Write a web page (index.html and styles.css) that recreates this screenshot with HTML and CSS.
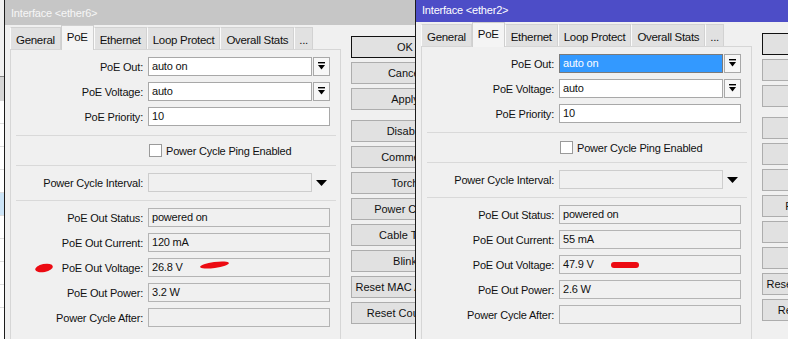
FILE: index.html
```html
<!DOCTYPE html>
<html lang="en">

<head>
  <meta charset="UTF-8">
  <title>Interface PoE</title>
  <link rel="stylesheet" href="styles.css">
</head>

<body>
  <div class="desk">
    <!-- list window behind, only a sliver shows -->
    <div class="behind">
      <div class="bh-top"></div>
      <div class="bh-head"></div>
      <div class="bh-row"></div>
      <div class="bh-row"></div>
      <div class="bh-row"></div>
      <div class="bh-row"></div>
      <div class="bh-row sel"></div>
      <div class="bh-row"></div>
      <div class="bh-row"></div>
      <div class="bh-row"></div>
      <div class="bh-row"></div>
    </div>

    <section class="win win-left">
      <div class="title">Interface &lt;ether6&gt;</div>
      <div class="body">
        <div class="main">
          <div class="tabs">
            <span class="tab">General</span>
            <span class="tab on">PoE</span>
            <span class="tab">Ethernet</span>
            <span class="tab">Loop Protect</span>
            <span class="tab">Overall Stats</span>
            <span class="tab more">...</span>
          </div>
          <div class="panel">
            <div class="grp first">
              <div class="row">
                <label class="label">PoE Out:</label>
                <div class="combo">
                  <div class="field">auto on</div>
                  <div class="drop"><svg width="9" height="9" viewBox="0 0 9 9"><rect x="1" y="0" width="7" height="1.4" fill="#000"/><path d="M1 3 H8 L4.5 7.5 Z" fill="#000"/></svg></div>
                </div>
              </div>
              <div class="row">
                <label class="label">PoE Voltage:</label>
                <div class="combo">
                  <div class="field">auto</div>
                  <div class="drop"><svg width="9" height="9" viewBox="0 0 9 9"><rect x="1" y="0" width="7" height="1.4" fill="#000"/><path d="M1 3 H8 L4.5 7.5 Z" fill="#000"/></svg></div>
                </div>
              </div>
              <div class="row">
                <label class="label">PoE Priority:</label>
                <div class="field">10</div>
              </div>
            </div>
            <hr class="sep">
            <div class="grp chk">
              <div class="row">
                <span></span>
                <label class="check"><span class="box"></span>Power Cycle Ping Enabled</label>
              </div>
            </div>
            <hr class="sep">
            <div class="grp">
              <div class="row">
                <label class="label">Power Cycle Interval:</label>
                <div class="combo">
                  <div class="field off"></div>
                  <div class="arrow"><svg width="11" height="6" viewBox="0 0 11 6"><path d="M0 0 H11 L5.5 6 Z" fill="#000"/></svg></div>
                </div>
              </div>
            </div>
            <hr class="sep">
            <div class="grp">
              <div class="row">
                <label class="label">PoE Out Status:</label>
                <div class="field ro">powered on</div>
              </div>
              <div class="row">
                <label class="label">PoE Out Current:</label>
                <div class="field ro">120 mA</div>
              </div>
              <div class="row">
                <label class="label">PoE Out Voltage:</label>
                <div class="field ro">26.8 V</div>
              </div>
              <div class="row">
                <label class="label">PoE Out Power:</label>
                <div class="field ro">3.2 W</div>
              </div>
              <div class="row">
                <label class="label">Power Cycle After:</label>
                <div class="field ro"></div>
              </div>
            </div>
          </div>
        </div>
        <div class="buttons">
          <button class="btn def">OK</button>
          <button class="btn">Cancel</button>
          <button class="btn">Apply</button>
          <button class="btn gap">Disable</button>
          <button class="btn">Comment</button>
          <button class="btn">Torch</button>
          <button class="btn">Power Cycle</button>
          <button class="btn">Cable Test</button>
          <button class="btn">Blink</button>
          <button class="btn">Reset MAC Address</button>
          <button class="btn">Reset Counters</button>
        </div>
      </div>
    </section>

    <section class="win win-right">
      <div class="title">Interface &lt;ether2&gt;</div>
      <div class="body">
        <div class="main">
          <div class="tabs">
            <span class="tab">General</span>
            <span class="tab on">PoE</span>
            <span class="tab">Ethernet</span>
            <span class="tab">Loop Protect</span>
            <span class="tab">Overall Stats</span>
            <span class="tab more">...</span>
          </div>
          <div class="panel">
            <div class="grp first">
              <div class="row">
                <label class="label">PoE Out:</label>
                <div class="combo">
                  <div class="field picked">auto on</div>
                  <div class="drop"><svg width="9" height="9" viewBox="0 0 9 9"><rect x="1" y="0" width="7" height="1.4" fill="#000"/><path d="M1 3 H8 L4.5 7.5 Z" fill="#000"/></svg></div>
                </div>
              </div>
              <div class="row">
                <label class="label">PoE Voltage:</label>
                <div class="combo">
                  <div class="field">auto</div>
                  <div class="drop"><svg width="9" height="9" viewBox="0 0 9 9"><rect x="1" y="0" width="7" height="1.4" fill="#000"/><path d="M1 3 H8 L4.5 7.5 Z" fill="#000"/></svg></div>
                </div>
              </div>
              <div class="row">
                <label class="label">PoE Priority:</label>
                <div class="field">10</div>
              </div>
            </div>
            <hr class="sep">
            <div class="grp chk">
              <div class="row">
                <span></span>
                <label class="check"><span class="box"></span>Power Cycle Ping Enabled</label>
              </div>
            </div>
            <hr class="sep">
            <div class="grp">
              <div class="row">
                <label class="label">Power Cycle Interval:</label>
                <div class="combo">
                  <div class="field off"></div>
                  <div class="arrow"><svg width="11" height="6" viewBox="0 0 11 6"><path d="M0 0 H11 L5.5 6 Z" fill="#000"/></svg></div>
                </div>
              </div>
            </div>
            <hr class="sep">
            <div class="grp">
              <div class="row">
                <label class="label">PoE Out Status:</label>
                <div class="field ro">powered on</div>
              </div>
              <div class="row">
                <label class="label">PoE Out Current:</label>
                <div class="field ro">55 mA</div>
              </div>
              <div class="row">
                <label class="label">PoE Out Voltage:</label>
                <div class="field ro">47.9 V</div>
              </div>
              <div class="row">
                <label class="label">PoE Out Power:</label>
                <div class="field ro">2.6 W</div>
              </div>
              <div class="row">
                <label class="label">Power Cycle After:</label>
                <div class="field ro"></div>
              </div>
            </div>
          </div>
        </div>
        <div class="buttons">
          <button class="btn def">OK</button>
          <button class="btn">Cancel</button>
          <button class="btn">Apply</button>
          <button class="btn gap">Disable</button>
          <button class="btn">Comment</button>
          <button class="btn">Torch</button>
          <button class="btn">Power Cycle</button>
          <button class="btn">Cable Test</button>
          <button class="btn">Blink</button>
          <button class="btn">Reset MAC Address</button>
          <button class="btn">Reset Counters</button>
        </div>
      </div>
    </section>
  </div>

  <!-- red marker scribbles on top of the screenshot -->
  <div class="mark m1"></div>
  <div class="mark m2"></div>
  <div class="mark m3"></div>
</body>
</html>
```

FILE: styles.css
```css
* {
  box-sizing: border-box;
}

body {
  margin: 0;
  width: 788px;
  height: 339px;
  overflow: hidden;
  position: relative;
  background: #f0f0f0;
  font-family: "Liberation Sans", Arial, sans-serif;
  font-size: 11px;
  letter-spacing: -0.2px;
  color: #111;
}

.desk {
  display: flex;
  align-items: flex-start;
  height: 339px;
}

/* window in the back */
.behind {
  width: 4px;
  height: 339px;
  flex: none;
  background: #fff;
}

.bh-top {
  height: 77px;
  background: #f0f0f0;
  border-bottom: 1px solid #888;
}

.bh-head {
  height: 24px;
  background: #d6d6d6;
}

.bh-row {
  height: 23px;
  border-bottom: 1px solid #dedede;
}

.bh-row.sel {
  background: #cce4f7;
}

/* dialog windows */
.win {
  flex: none;
  height: 350px;
  overflow: hidden;
  background: #f0f0f0;
  border-left: 1px solid #1c1c1c;
}

.win-left {
  width: 411px;
}

.win-right {
  width: 373px;
  margin-top: -3px;
}

.title {
  height: 25px;
  padding: 6px 0 0 6px;
  line-height: 14px;
  white-space: nowrap;
  color: #f6f6f6;
  background: #c6c6c6;
}

.win-right .title {
  color: #fff;
  background: #4d4dc7;
}

.body {
  display: flex;
  padding-left: 5px;
}

.main {
  width: 331px;
  flex: none;
}

.tabs {
  display: flex;
  align-items: flex-end;
  height: 24px;
}

.tab {
  height: 22px;
  padding: 5px 5px 0;
  line-height: 14px;
  font-size: 11.5px;
  letter-spacing: -0.3px;
  white-space: nowrap;
  background: #e1e1e1;
  border: 1px solid #d2d2d2;
  border-bottom: none;
  border-left-color: #fbfbfb;
}

.tab.on {
  height: 25px;
  margin-bottom: -1px;
  padding-top: 4px;
  position: relative;
  z-index: 2;
  background: #f4f4f4;
  border-color: #cfcfcf;
}

.tab.more {
  padding: 5px 4px 0;
}

.panel {
  height: 320px;
  border: 1px solid #d6d6d6;
  padding-top: 7px;
}

.grp {
  display: flex;
  flex-direction: column;
  gap: 6px;
  padding-bottom: 8px;
}

.grp.first {
  padding-bottom: 9px;
}

.sep + .grp {
  padding-top: 7px;
}

.sep + .grp.chk {
  padding: 5px 0;
}

.sep {
  height: 1px;
  margin: 0 4px 0 5px;
  border: 0;
  background: #d9d9d9;
}

.row {
  display: grid;
  grid-template-columns: 132px 182px;
  column-gap: 5px;
  align-items: center;
  height: 19px;
}

.label {
  text-align: right;
  white-space: nowrap;
}

.field {
  height: 19px;
  padding: 0 3px;
  line-height: 17px;
  white-space: nowrap;
  background: #fff;
  border: 1px solid #a8a8a8;
}

.field.ro {
  background: #f0f0f0;
  border-color: #b4b4b4;
}

.field.off {
  background: #f0f0f0;
  border-color: #cdcdcd;
}

.field.picked {
  color: #fff;
  background: #3399ff;
  border-color: #7a7a7a;
}

.combo {
  display: flex;
  gap: 1px;
}

.combo .field {
  flex: 1;
}

.drop {
  width: 17px;
  height: 19px;
  flex: none;
  display: flex;
  align-items: center;
  justify-content: center;
  background: #f7f7f7;
  border: 1px solid #a8a8a8;
}

.arrow {
  width: 17px;
  height: 19px;
  flex: none;
  display: flex;
  align-items: center;
  justify-content: center;
}

.check {
  display: flex;
  align-items: center;
  gap: 4px;
  white-space: nowrap;
}

.box {
  width: 13px;
  height: 13px;
  margin-left: 1px;
  background: #fff;
  border: 1px solid #9a9a9a;
}

.buttons {
  display: flex;
  flex-direction: column;
  gap: 4px;
  margin-left: 10px;
  padding-top: 11px;
}

.btn {
  width: 108px;
  height: 22px;
  flex: none;
  padding: 0;
  font: inherit;
  color: #111;
  text-align: center;
  white-space: nowrap;
  background: #e1e1e1;
  border: 1px solid #adadad;
  border-radius: 0;
}

.btn.def {
  border-color: #111;
}

.btn.gap {
  margin-top: 6px;
}

/* marker scribbles */
.mark {
  position: absolute;
  background: #ec0a12;
  border-radius: 50%;
}

.m1 {
  left: 35px;
  top: 264px;
  width: 18px;
  height: 8px;
  transform: rotate(-12deg);
}

.m2 {
  left: 200px;
  top: 262px;
  width: 29px;
  height: 6px;
  transform: rotate(-8deg);
}

.m3 {
  left: 611px;
  top: 262px;
  width: 28px;
  height: 6px;
  border-radius: 3px;
}
```
